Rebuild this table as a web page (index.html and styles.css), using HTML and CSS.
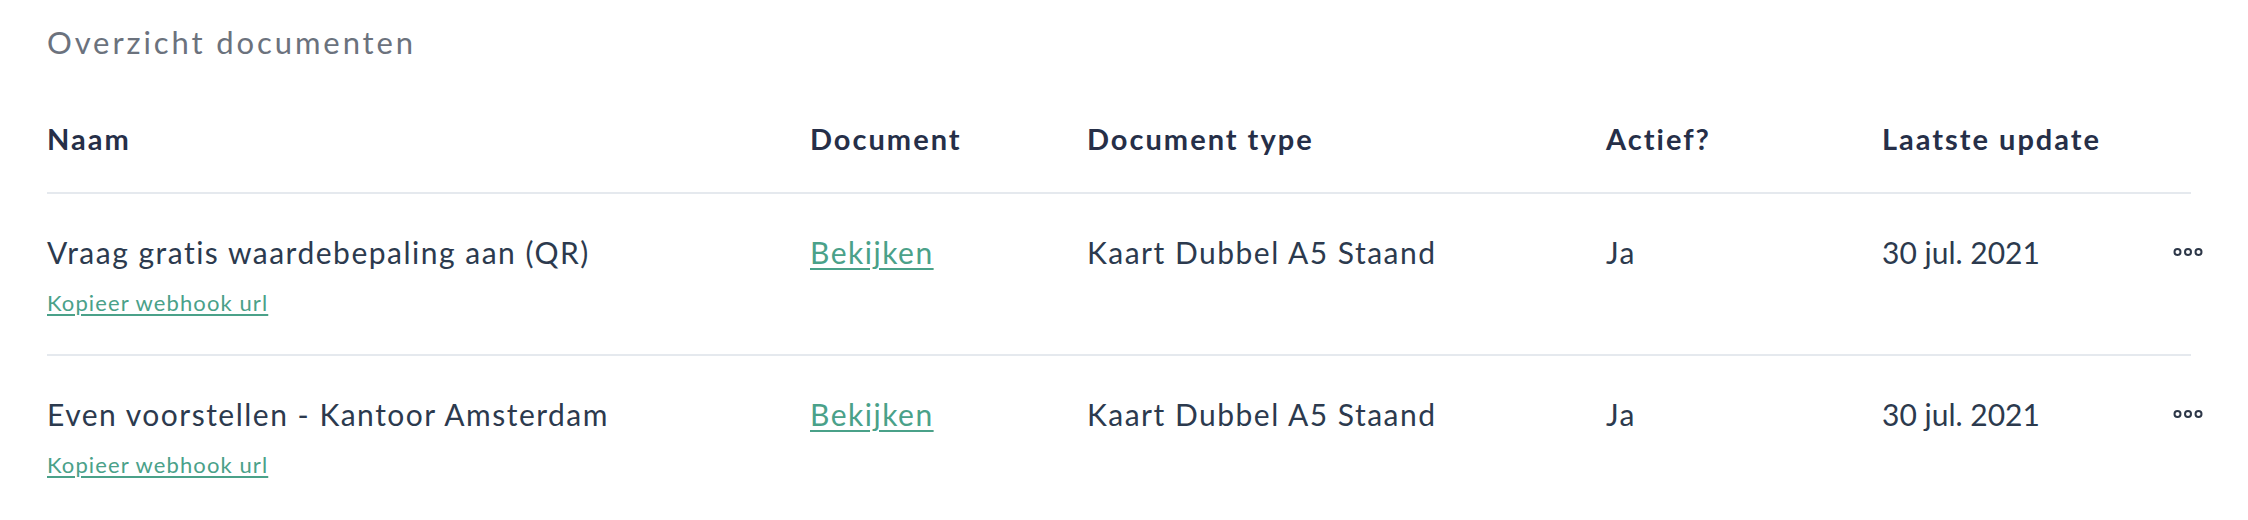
FILE: index.html
```html
<!DOCTYPE html>
<html lang="nl">
<head>
<meta charset="utf-8">
<title>Overzicht documenten</title>
<link rel="stylesheet" href="styles.css">
</head>
<body>
<main class="page">
  <h2 class="title">Overzicht documenten</h2>
  <div class="table">
    <div class="row head">
      <div class="cell">Naam</div>
      <div class="cell">Document</div>
      <div class="cell">Document type</div>
      <div class="cell">Actief?</div>
      <div class="cell">Laatste update</div>
      <div class="cell"></div>
    </div>
    <div class="row body">
      <div class="cell name">
        <span>Vraag gratis waardebepaling aan (QR)</span>
        <a class="small-link" href="#">Kopieer webhook url</a>
      </div>
      <div class="cell"><a class="link" href="#">Bekijken</a></div>
      <div class="cell">Kaart Dubbel A5 Staand</div>
      <div class="cell">Ja</div>
      <div class="cell date">30 jul. 2021</div>
      <div class="cell more">
        <svg class="dots" width="30" height="10" viewBox="0 0 30 10"><circle cx="4.5" cy="5" r="3" /><circle cx="15" cy="5" r="3" /><circle cx="25.5" cy="5" r="3" /></svg>
      </div>
    </div>
    <div class="row body last">
      <div class="cell name">
        <span>Even voorstellen - Kantoor Amsterdam</span>
        <a class="small-link" href="#">Kopieer webhook url</a>
      </div>
      <div class="cell"><a class="link" href="#">Bekijken</a></div>
      <div class="cell">Kaart Dubbel A5 Staand</div>
      <div class="cell">Ja</div>
      <div class="cell date">30 jul. 2021</div>
      <div class="cell more">
        <svg class="dots" width="30" height="10" viewBox="0 0 30 10"><circle cx="4.5" cy="5" r="3" /><circle cx="15" cy="5" r="3" /><circle cx="25.5" cy="5" r="3" /></svg>
      </div>
    </div>
  </div>
</main>
</body>
</html>
```
FILE: styles.css
```css
* { box-sizing: border-box; }
html, body { margin: 0; padding: 0; background: #ffffff; }
body {
  font-family: "Lato", "Noto Sans", sans-serif;
  color: #2c3a4e;
}
.page {
  padding: 22px 57px 0 47px;
}
.title {
  margin: 0;
  font-size: 31px;
  line-height: 40px;
  font-weight: 400;
  letter-spacing: 2.9px;
  color: #6b727d;
}
.table {
  margin-top: 57px;
}
.row {
  display: grid;
  grid-template-columns: 763px 277px 519px 276px 291px 18px;
  align-items: start;
}
.head {
  font-weight: 700;
  font-size: 29px;
  line-height: 40px;
  letter-spacing: 2px;
  color: #262f48;
  padding-bottom: 33px;
  border-bottom: 2px solid #e5e9ee;
}
.body {
  font-size: 30px;
  line-height: 40px;
  letter-spacing: 1.5px;
  padding: 38px 0 37px;
  border-bottom: 2px solid #e5e9ee;
}
.body.last { border-bottom: none; }
.date { letter-spacing: 0; }
.name {
  display: flex;
  flex-direction: column;
  align-items: flex-start;
  gap: 17px;
}
.link {
  color: #4aa189;
  text-decoration: underline;
  text-underline-offset: 4px;
  text-decoration-thickness: 2px;
}
.small-link {
  color: #4aa189;
  font-size: 22px;
  line-height: 28px;
  letter-spacing: 1.1px;
  text-decoration: underline;
  text-underline-offset: 3px;
  text-decoration-thickness: 2px;
}
.more {
  display: flex;
  align-items: center;
  height: 40px;
}
.dots {
  display: block;
  flex: none;
  fill: none;
  stroke: #2d3748;
  stroke-width: 2;
}
```
